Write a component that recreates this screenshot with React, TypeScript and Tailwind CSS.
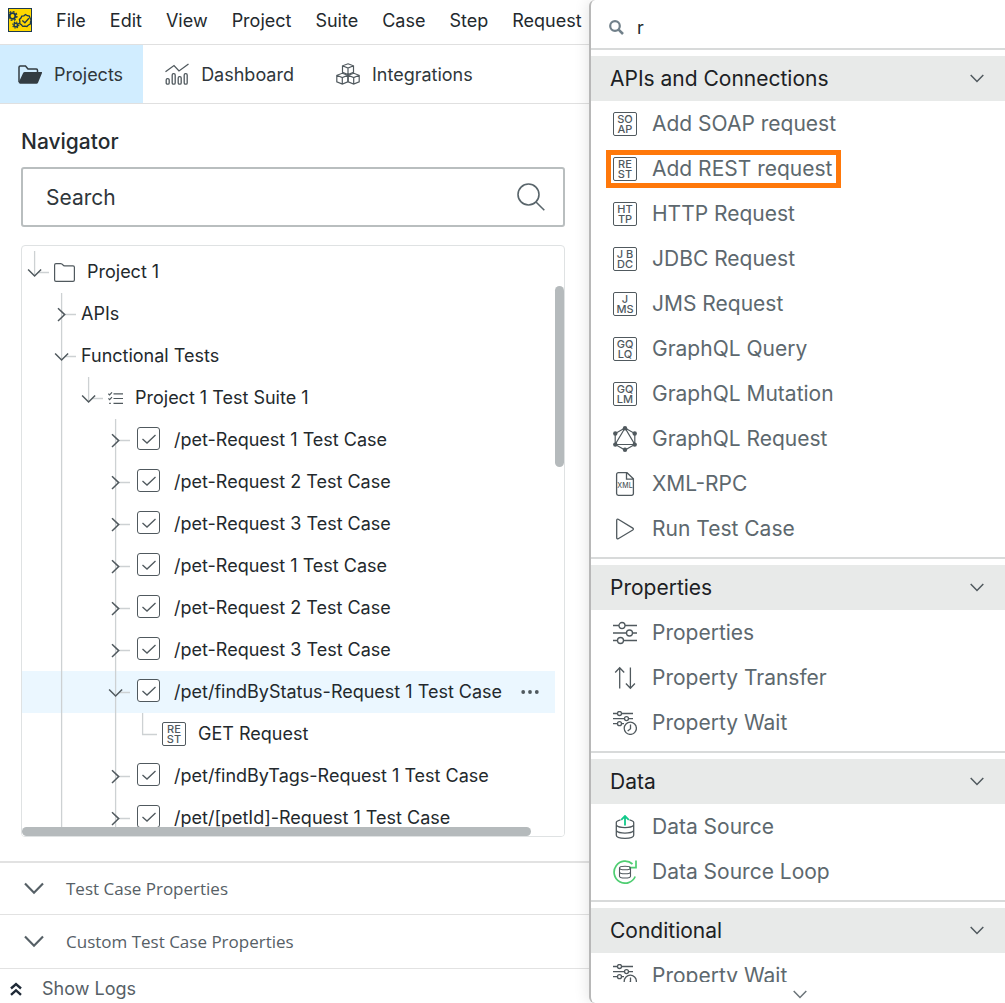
import clsx from "clsx";
import React, { useState } from "react";

const menuItems = ["File", "Edit", "View", "Project", "Suite", "Case", "Step", "Request"];

type TreeNode = {
  label: string;
  depth: number;
  kind: "folder" | "group" | "suite" | "case" | "rest";
  // depths whose guide line runs through the row
  guides: number[];
  line: "top" | "full" | "corner";
  open?: boolean;
  selected?: boolean;
};

const testCase = (label: string): TreeNode => ({
  label,
  depth: 3,
  kind: "case",
  guides: [1],
  line: "full",
});

const treeNodes: TreeNode[] = [
  { label: "Project 1", depth: 0, kind: "folder", guides: [], line: "top", open: true },
  { label: "APIs", depth: 1, kind: "group", guides: [], line: "full" },
  { label: "Functional Tests", depth: 1, kind: "group", guides: [], line: "full", open: true },
  { label: "Project 1 Test Suite 1", depth: 2, kind: "suite", guides: [1], line: "top", open: true },
  testCase("/pet-Request 1 Test Case"),
  testCase("/pet-Request 2 Test Case"),
  testCase("/pet-Request 3 Test Case"),
  testCase("/pet-Request 1 Test Case"),
  testCase("/pet-Request 2 Test Case"),
  testCase("/pet-Request 3 Test Case"),
  { ...testCase("/pet/findByStatus-Request 1 Test Case"), open: true, selected: true },
  { label: "GET Request", depth: 4, kind: "rest", guides: [1, 3], line: "corner" },
  testCase("/pet/findByTags-Request 1 Test Case"),
  testCase("/pet/[petId]-Request 1 Test Case"),
];

const Chevron = ({ className }: { className?: string }) => (
  <svg viewBox="0 0 14 9" className={clsx("fill-none stroke-current", className)}>
    <path d="M.7 1 7 7.5 13.3 1" strokeWidth="1.5" />
  </svg>
);

const LetterIcon = ({ text }: { text: string }) => (
  <span className="block size-6 shrink-0 whitespace-pre rounded-[2px] border border-[#50595e] pt-px text-center text-[11px] font-medium leading-[10px] text-[#50595e]">
    {text}
  </span>
);

const GraphqlIcon = () => (
  <svg viewBox="0 0 24 26" className="h-[26px] w-6 shrink-0 text-[#50595e]">
    <path d="M12 2 21.8 7.5v11L12 24 2.2 18.5v-11zM12 2 2.2 18.5h19.6z" fill="none" stroke="currentColor" strokeWidth="1.2" />
    <g fill="currentColor">
      <circle cx="12" cy="2.2" r="2.2" />
      <circle cx="21.7" cy="7.5" r="2.2" />
      <circle cx="21.7" cy="18.6" r="2.2" />
      <circle cx="12" cy="23.8" r="2.2" />
      <circle cx="2.3" cy="18.6" r="2.2" />
      <circle cx="2.3" cy="7.5" r="2.2" />
    </g>
  </svg>
);

const LineIcon = ({ children }: { children: React.ReactNode }) => (
  <svg viewBox="0 0 24 24" className="size-6 shrink-0 fill-none stroke-[#50595e]" strokeWidth="1.3">
    {children}
  </svg>
);

const XmlIcon = () => (
  <LineIcon>
    <path d="M5.4.7H14l6.400 6.200v14.600a1.800 1.800 0 0 1-1.800 1.800H5.400a1.800 1.800 0 0 1-1.800-1.800V2.500A1.800 1.800 0 0 1 5.400.7zM13.500.7v6.500h6.800" />
    <text x="12" y="15.600" fontFamily="Inter, sans-serif" fontSize="7" fontWeight="500" textAnchor="middle" fill="#50595e" stroke="none">
      XML
    </text>
  </LineIcon>
);

const RunIcon = () => (
  <LineIcon>
    <path d="M3.700 3.300v17.400c0 1 .7 1.400 1.500 1L19.800 13c.8-.5.8-1.400 0-1.900L5.200 2.300c-.8-.5-1.500 0-1.500 1z" />
  </LineIcon>
);

const SlidersIcon = () => (
  <LineIcon>
    <path d="M0 4.500h6M12 4.500h12M0 12h13.500M19.500 12H24M0 19.500h4.500M10.500 19.500H24" />
    <circle cx="9" cy="4.500" r="3" />
    <circle cx="16.500" cy="12" r="3" />
    <circle cx="7.500" cy="19.500" r="3" />
  </LineIcon>
);

const TransferIcon = () => (
  <LineIcon>
    <path d="M6.700 22.500V2M2.200 6.500l4.500-4.800 4.500 4.800M17.400 1.500V22M12.900 17.500l4.500 4.800 4.500-4.800" />
  </LineIcon>
);

const WaitIcon = () => (
  <LineIcon>
    <path d="M0 2.500h4.500M8.500 2.500H20M0 7.600h11.500M15.500 7.600H20M0 12.700h4.500M8.500 12.700H11" />
    <circle cx="6.500" cy="2.500" r="2" />
    <circle cx="13.500" cy="7.600" r="2" />
    <circle cx="6.500" cy="12.700" r="2" />
    <circle cx="17.300" cy="17.300" r="6.100" />
    <path d="M17.500 13.500v4.200l-2.800 2.200" />
  </LineIcon>
);

const DataSourceIcon = () => (
  <LineIcon>
    <path d="M7.500 4.800C4.800 5.500 3.300 6.200 3.300 7.500v12.800c0 1.700 3.500 3 8.700 3s8.700-1.300 8.700-3V7.500c0-1.300-1.500-2-4.200-2.700M3.300 10.300c1.500 1.700 4.500 2.300 8.700 2.300s7.200-.6 8.700-2.300M3.300 15.800c1.500 1.700 4.500 2.300 8.700 2.300s7.200-.6 8.700-2.300" />
    <path d="M12 10.500V1.200M8.200 4.800 12 1l3.800 3.800" stroke="#10c98a" strokeWidth="1.800" />
  </LineIcon>
);

const DataLoopIcon = () => (
  <LineIcon>
    <path d="M19.500 4A11 11 0 1 0 22.200 16.500M23 .5v7.200h-7" stroke="#4fce72" strokeWidth="1.700" />
    <path d="M6.500 8c0-1 2.300-1.800 5.500-1.800s5.500.8 5.500 1.800-2.300 1.800-5.500 1.800S6.500 9 6.500 8zv8.200c0 1 2.300 1.800 5.500 1.800s5.500-.8 5.500-1.800V8M6.500 12c0 1 2.300 1.800 5.500 1.800s5.500-.8 5.500-1.800" strokeWidth="1.100" />
  </LineIcon>
);

const sections = [
  {
    title: "APIs and Connections",
    items: [
      { label: "Add SOAP request", icon: <LetterIcon text={"SO\nAP"} /> },
      { label: "Add REST request", icon: <LetterIcon text={"RE\nST"} />, highlighted: true },
      { label: "HTTP Request", icon: <LetterIcon text={"HT\nTP"} /> },
      { label: "JDBC Request", icon: <LetterIcon text={"J B\nDC"} /> },
      { label: "JMS Request", icon: <LetterIcon text={"J\nMS"} /> },
      { label: "GraphQL Query", icon: <LetterIcon text={"GQ\nLQ"} /> },
      { label: "GraphQL Mutation", icon: <LetterIcon text={"GQ\nLM"} /> },
      { label: "GraphQL Request", icon: <GraphqlIcon /> },
      { label: "XML-RPC", icon: <XmlIcon /> },
      { label: "Run Test Case", icon: <RunIcon /> },
    ],
  },
  {
    title: "Properties",
    items: [
      { label: "Properties", icon: <SlidersIcon /> },
      { label: "Property Transfer", icon: <TransferIcon /> },
      { label: "Property Wait", icon: <WaitIcon /> },
    ],
  },
  {
    title: "Data",
    items: [
      { label: "Data Source", icon: <DataSourceIcon /> },
      { label: "Data Source Loop", icon: <DataLoopIcon /> },
    ],
  },
  {
    title: "Conditional",
    items: [{ label: "Property Wait", icon: <WaitIcon /> }],
  },
];

const Logo = () => (
  <svg viewBox="0 0 24 24" className="size-6 fill-none stroke-[#1d3a4f]">
    <rect x=".5" y=".5" width="23" height="23" fill="#ffd800" />
    <circle cx="4.500" cy="8" r="2.800" strokeWidth="1.800" />
    <circle cx="4.500" cy="8" r="4.400" strokeWidth="1.400" strokeDasharray="1.900 1.500" />
    <circle cx="7.800" cy="17" r="1.800" strokeWidth="1.500" />
    <circle cx="7.800" cy="17" r="3" strokeWidth="1.200" strokeDasharray="1.300 1.050" />
    <path d="M17.500 6.500l1.800 1.200 2.100.3.600 2.100 1.100 1.900-.6 2-.2 2.100-1.900.9-1.500 1.500-2.100-.4-2.100.3-1.300-1.600-1.700-1.200.2-2.100-.5-2 1.500-1.500.9-1.900 2.100-.3z" strokeWidth="1.300" />
    <path d="M14.300 12.500l2.600 2.300 4-4.600" strokeWidth="1.300" />
  </svg>
);

const MenuBar = () => (
  <header className="flex h-[45px] shrink-0 items-center border-b border-[#e0e0e0] pb-1 pl-2">
    <Logo />
    <nav className="ml-6 flex gap-6 text-[18px] text-[#23292d]">
      {menuItems.map((item) => (
        <button key={item}>{item}</button>
      ))}
    </nav>
  </header>
);

const Tabs = () => (
  <nav className="flex h-[59px] shrink-0 border-b border-[#e0e0e0] text-[18px] text-[#30373b]">
    <button className="flex items-center gap-3 bg-[#d1edff] pl-[18px] pr-5">
      <svg viewBox="0 0 24 19" className="h-[19px] w-6 text-[#333c42]">
        <path d="M1 17V2.200C1 1.500 1.500 1 2.200 1h5.300l2.500 3h8.300c.8 0 1.200.5 1.200 1.200V7" fill="none" stroke="currentColor" strokeWidth="1.500" />
        <path d="M6.800 7h16.400c.8 0 1 .5.8 1.100l-4 9.600c-.3.700-.8 1-1.500 1H2c-1.200 0-1.500-.7-1.100-1.600L5 8.200C5.300 7.400 5.900 7 6.800 7z" fill="currentColor" />
      </svg>
      Projects
    </button>
    <button className="flex items-center gap-3 pl-[22px] pr-5">
      <svg viewBox="0 0 24 22" className="h-[22px] w-6 fill-none stroke-[#50595e]" strokeWidth="1.300">
        <path d="M.5 8.800 9 2.500l5 5.500L23.500 1" />
        <rect x="1.200" y="15.700" width="3" height="5.500" rx="1.300" />
        <rect x="7.200" y="10.700" width="3" height="10.500" rx="1.300" />
        <rect x="13.200" y="13.700" width="3" height="7.500" rx="1.300" />
        <rect x="19.200" y="10.700" width="3" height="10.500" rx="1.300" />
      </svg>
      Dashboard
    </button>
    <button className="flex items-center gap-3 pl-[22px] pr-5">
      <svg viewBox="0 0 24 22" className="h-[22px] w-6 fill-none stroke-[#50595e]" strokeWidth="1.200">
        <path d="M12 .8l5.500 2v6.500L12 11.500 6.500 9.300V2.800zM6.500 2.800 12 5l5.500-2.200M12 5v6.500" />
        <path d="M6.300 10.300l5.500 2v6.500l-5.500 2.300-5.500-2.300v-6.500zM.8 12.300l5.500 2.200 5.500-2.200M6.300 14.500v6.600" />
        <path d="M17.700 10.300l5.500 2v6.500l-5.500 2.300-5.500-2.300v-6.500zM12.200 12.300l5.500 2.200 5.500-2.200M17.700 14.500v6.600" />
      </svg>
      Integrations
    </button>
  </nav>
);

const GuideCell = () => (
  <svg viewBox="0 0 27 42" className="h-[42px] w-[27px] shrink-0">
    <path d="M12.600 0v42" stroke="#cdd1d3" strokeWidth="1.300" />
  </svg>
);

const ToggleCell = ({ line, open }: { line: TreeNode["line"]; open?: boolean }) => (
  <svg viewBox="0 0 27 42" className="h-[42px] w-[27px] fill-none">
    <path
      d={line === "full" ? "M12.600 0v42M16 21.500h11" : line === "top" ? "M12.600 0v24M16 21.500h11" : "M12.600 0v21.500h14.400"}
      stroke="#cdd1d3"
      strokeWidth="1.300"
    />
    {line !== "corner" && (
      <path d={open ? "M6.100 18.500 12.600 25l6.500-6.500" : "M9 15.200 15.700 21.600 9 28"} stroke="#50595e" strokeWidth="1.500" />
    )}
  </svg>
);

const TreeRow = ({ node }: { node: TreeNode }) => {
  const [checked, setChecked] = useState(true);
  const cells = Array.from({ length: node.depth }, (_, i) => i);

  return (
    <li className={clsx("mr-[9px] flex h-[42px] items-center", node.selected && "bg-[#ebf7ff]")}>
      {cells.map((i) =>
        node.guides.includes(i) ? <GuideCell key={i} /> : <span key={i} className="w-[27px] shrink-0" />,
      )}
      {node.line === "corner" ? (
        <ToggleCell line={node.line} />
      ) : (
        <button aria-label={`Toggle ${node.label}`} aria-expanded={!!node.open} className="shrink-0">
          <ToggleCell line={node.line} open={node.open} />
        </button>
      )}
      {node.kind === "folder" && (
        <svg viewBox="0 0 21 19" className="ml-[5px] mr-3 h-[19px] w-[21px] fill-none stroke-[#50595e]" strokeWidth="1.200">
          <path d="M.6 2c0-.8.6-1.400 1.400-1.400h4.600c1.300 0 1.800.5 2.300 1.300.4.700.9 1 1.800 1H19c.8 0 1.400.6 1.400 1.400V17c0 .8-.6 1.400-1.400 1.400H2c-.8 0-1.400-.6-1.400-1.400z" />
        </svg>
      )}
      {node.kind === "group" && <span className="w-[5px]" />}
      {node.kind === "suite" && (
        <svg viewBox="0 0 15 13" className="ml-[5px] mr-3 h-[13px] w-[15px] fill-none stroke-[#50595e]" strokeWidth="1.200">
          <path d="M5.500 1.800H15M5.500 6.500H15M5.500 11.300H15M.4 1.700l1.200 1.200L4 .4M.4 6.400l1.200 1.200L4 5.100M1.200 11.300h1.600" />
        </svg>
      )}
      {node.kind === "rest" && (
        <span className="ml-[5px] mr-3">
          <LetterIcon text={"RE\nST"} />
        </span>
      )}
      {node.kind === "case" ? (
        <label className="ml-[7px] flex items-start gap-[14px] whitespace-nowrap">
          <span className="grid size-[23px] place-items-center *:[grid-area:1/1]">
            <input
              type="checkbox"
              checked={checked}
              onChange={() => setChecked(!checked)}
              className="size-[23px] appearance-none rounded-[3px] border border-[#50595e] bg-white"
            />
            {checked && (
              <svg viewBox="0 0 14 10" className="pointer-events-none h-[10px] w-[14px] fill-none stroke-[#50595e]" strokeWidth="1.300">
                <path d="M.5 5 5 9l8.500-8" />
              </svg>
            )}
          </span>
          {node.label}
        </label>
      ) : (
        <span>{node.label}</span>
      )}
      {node.selected && (
        <button aria-label="More" className="ml-auto mr-4">
          <svg viewBox="0 0 18 4" className="h-1 w-[18px] fill-[#50595e]">
            <circle cx="2.200" cy="2" r="1.900" />
            <circle cx="9" cy="2" r="1.900" />
            <circle cx="15.800" cy="2" r="1.900" />
          </svg>
        </button>
      )}
    </li>
  );
};

const Navigator = () => (
  <section className="flex min-h-0 flex-1 flex-col pb-6 pl-[21px] pr-6">
    <h2 className="mt-6 text-[21px] font-medium leading-7 text-[#262c30]">Navigator</h2>
    <label className="mt-[11px] flex h-[60px] shrink-0 items-center rounded-[3px] border-2 border-[#b9bebf] pl-[23px] pr-[18px]">
      <input
        type="search"
        aria-label="Search"
        placeholder="Search"
        className="min-w-0 flex-1 pt-0.5 text-[21px] outline-none placeholder:text-[#30373b]"
      />
      <svg viewBox="0 0 28 28" className="size-7 fill-none stroke-[#59656b]" strokeWidth="1.600">
        <circle cx="11.500" cy="11.500" r="10.500" />
        <path d="M19 19l8.300 8.300" />
      </svg>
    </label>
    <div className="relative mt-[18px] min-h-0 flex-1 overflow-hidden rounded-[4px] border border-[#dfe2e3]">
      <ul className="pt-[5px] text-[18px] leading-[26px] text-[#23292d]">
        {treeNodes.map((node, i) => (
          <TreeRow key={i} node={node} />
        ))}
      </ul>
      <div className="absolute right-0 top-10 h-[181px] w-[9px] rounded-full bg-[#b5babc]" />
      <div className="absolute inset-x-0 bottom-0 h-[9px] bg-white">
        <div className="h-full w-[94%] rounded-full bg-[#b5babc]" />
      </div>
    </div>
  </section>
);

const BottomPanels = () => (
  <footer className="shrink-0 text-[#566066]">
    {["Test Case Properties", "Custom Test Case Properties"].map((title, i) => (
      <button
        key={title}
        className={clsx(
          "flex w-full items-center border-[#e2e2e2] pl-6 font-['Open_Sans',sans-serif] text-[17px]",
          i === 0 ? "h-[53px] border-t-2" : "h-[54px] border-t",
        )}
      >
        <Chevron className="mr-[22px] h-[13px] w-5" />
        {title}
      </button>
    ))}
    <button className="flex h-[35px] w-full items-center border-t border-[#e2e2e2] pl-[10px] pt-[5px] text-[18px]">
      <svg viewBox="0 0 12 14" className="mr-5 h-[14px] w-3 fill-none stroke-[#1f2a37]" strokeWidth="2.400">
        <path d="M1 6.500l5-4.500 5 4.500M1 12.800l5-4.500 5 4.500" />
      </svg>
      Show Logs
    </button>
  </footer>
);

const StepMenu = () => {
  const [query, setQuery] = useState("r");

  return (
    <aside className="z-10 flex w-[416px] shrink-0 flex-col rounded-l-[6px] border-l-2 border-[#b8b8b8] bg-white shadow-[0_0_16px_rgba(0,0,0,0.12)]">
      <label className="flex h-[50px] shrink-0 items-center gap-[13px] border-b-2 border-[#d8dada] pl-[18px] pt-[6px]">
        <svg viewBox="0 0 15 15" className="size-[15px] fill-none stroke-[#71808a]">
          <circle cx="6" cy="6" r="4.800" strokeWidth="2.200" />
          <path d="M9.600 9.600l4.400 4.400" strokeWidth="2.600" />
        </svg>
        <input
          aria-label="Filter steps"
          value={query}
          onChange={(e) => setQuery(e.target.value)}
          className="min-w-0 flex-1 text-[18px] text-[#23292d] outline-none"
        />
      </label>
      <div className="min-h-0 flex-1 overflow-hidden">
        {sections.map((section) => (
          <section key={section.title} className="border-b-2 border-[#d8dada] py-[6px]">
            <button className="flex h-[45px] w-full items-center justify-between bg-[#e8eae9] pl-[19px] pr-[21px] text-[21px] text-[#1c2124]">
              {section.title}
              <Chevron className="h-[9px] w-[14px] text-[#50595e]" />
            </button>
            <ul>
              {section.items.map((item) => (
                <li key={item.label} className="flex h-[45px] items-center pl-[22px]">
                  <button
                    className={clsx(
                      "flex h-6 items-center gap-[15px] pr-0.5 text-[21px] leading-6 text-[#5d686e]",
                      item.highlighted && "outline-[5px] outline-offset-2 outline-[#ff780a]",
                    )}
                  >
                    {item.icon}
                    {item.label}
                  </button>
                </li>
              ))}
            </ul>
          </section>
        ))}
      </div>
      <button aria-label="Scroll down" className="flex h-[21px] shrink-0 items-center justify-center pl-1 pt-[3px]">
        <Chevron className="h-[9px] w-[14px] text-[#6b7479]" />
      </button>
    </aside>
  );
};

export default function App() {
  return (
    <div className="flex h-screen overflow-hidden bg-white font-[Inter,sans-serif]">
      <main className="flex min-w-0 flex-1 flex-col">
        <MenuBar />
        <Tabs />
        <Navigator />
        <BottomPanels />
      </main>
      <StepMenu />
    </div>
  );
}
